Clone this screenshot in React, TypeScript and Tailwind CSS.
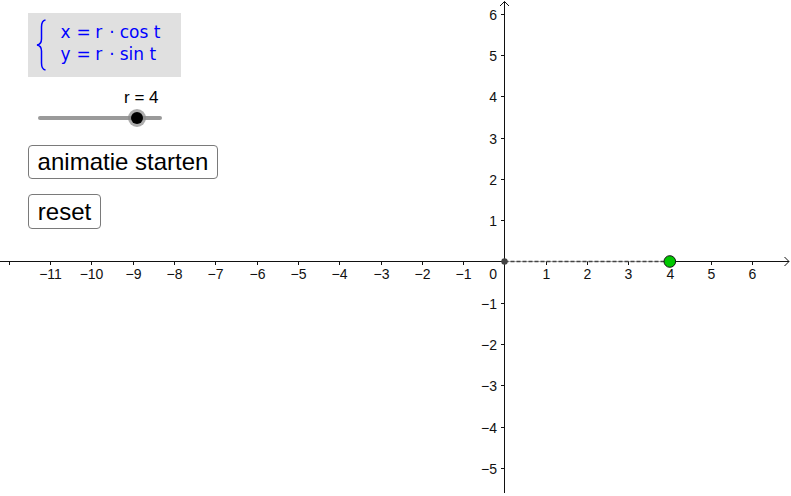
import React from "react";

const U = 41.33;
const OX = 504.5;
const OY = 261.5;

const xs = Array.from({ length: 19 }, (_, i) => i - 12).filter((k) => k !== 0);
const ys = Array.from({ length: 12 }, (_, i) => i - 5).filter((k) => k !== 0);

const fmt = (k: number) => (k < 0 ? "\u2212" + Math.abs(k) : String(k));

function Graph() {
  const px = OX + 4 * U;
  return (
    <svg
      className="absolute inset-0"
      width={791}
      height={496}
      viewBox="0 0 791 496"
      fontFamily='"Liberation Sans", Arial, sans-serif'
      fontSize={14}
    >
      {/* x axis */}
      <line x1={0} y1={OY} x2={OX} y2={OY} stroke="#111" strokeWidth={1} />
      <line x1={px} y1={OY} x2={789} y2={OY} stroke="#111" strokeWidth={1} />
      <line x1={OX} y1={OY} x2={px} y2={OY} stroke="#b8b8b8" strokeWidth={1} />
      <polyline points="784.5,257 789,261.5 784.5,266" fill="none" stroke="#111" strokeWidth={1} />
      {/* y axis */}
      <line x1={OX} y1={1.5} x2={OX} y2={493} stroke="#111" strokeWidth={1} />
      <polyline points="500,6 504.5,1.5 509,6" fill="none" stroke="#111" strokeWidth={1} />
      {/* x ticks and labels */}
      {xs.map((k) => {
        const x = Math.round(OX + k * U) + 0.5;
        return (
          <g key={"x" + k}>
            <line x1={x} y1={OY} x2={x} y2={OY + 3.5} stroke="#111" strokeWidth={1} />
            {k > -12 && (
              <text x={x} y={278.5} textAnchor="middle" fill="#111">
                {fmt(k)}
              </text>
            )}
          </g>
        );
      })}
      <text x={497} y={278.5} textAnchor="end" fill="#111">
        0
      </text>
      {/* y ticks and labels */}
      {ys.map((k) => {
        const y = Math.round(OY - k * U) + 0.5;
        return (
          <g key={"y" + k}>
            <line x1={OX - 3.5} y1={y} x2={OX} y2={y} stroke="#111" strokeWidth={1} />
            <text x={497} y={y + 5} textAnchor="end" fill="#111">
              {fmt(k)}
            </text>
          </g>
        );
      })}
      {/* dashed segment */}
      <line
        x1={OX}
        y1={OY}
        x2={px}
        y2={OY}
        stroke="#444"
        strokeWidth={1.6}
        strokeDasharray="4 2"
      />
      {/* origin point */}
      <circle cx={OX} cy={OY} r={3.2} fill="#444" />
      {/* green point */}
      <circle cx={px} cy={OY} r={5.8} fill="#00c800" stroke="#111" strokeWidth={1} />
    </svg>
  );
}

function FormulaLine({ v, fn }: { v: string; fn: string }) {
  return (
    <div className="flex h-[22px] leading-[22px] whitespace-pre">
      <span>{v}</span>
      <span className="ml-[6px]">=</span>
      <span className="ml-[4.5px]">r</span>
      <span className="ml-[7px]">·</span>
      <span className="ml-[5px]">{fn}</span>
      <span className="ml-[5.5px]">t</span>
    </div>
  );
}

export default function App() {
  return (
    <div className="relative w-[791px] h-[496px] bg-white overflow-hidden">
      <Graph />
      <div className="absolute left-[28px] top-[13px] flex flex-col items-start">
        {/* formula box */}
        <div
          className="flex items-start w-[153px] h-[64px] bg-[#e0e0e0] pl-[7px] pt-[6px] text-[17px] text-[#0000ff]"
          style={{ fontFamily: '"DejaVu Sans", Verdana, sans-serif' }}
        >
          <svg width={12} height={52} viewBox="0 0 12 52" className="shrink-0">
            <path
              d="M10.5 1 C7.5 1.5 6.5 3.5 6.5 8 L6.5 20 C6.5 24 5 25.5 2 26 C5 26.5 6.5 28 6.5 32 L6.5 44 C6.5 48.5 7.5 50.5 10.5 51"
              fill="none"
              stroke="#0000ff"
              strokeWidth={1.5}
            />
          </svg>
          <div className="ml-[13.5px] mt-[2px] flex flex-col">
            <FormulaLine v="x" fn="cos" />
            <FormulaLine v="y" fn="sin" />
          </div>
        </div>

        {/* slider */}
        <div
          className="flex flex-col items-start"
          style={{ fontFamily: '"Liberation Sans", Arial, sans-serif' }}
        >
          <div className="ml-[96px] mt-[11px] text-[17px] leading-[19px] text-black whitespace-pre">
            r = 4
          </div>
          <div className="relative ml-[10px] mt-[9px] w-[124px] h-[4px] rounded-full bg-[#9a9a9a]">
            <div className="absolute left-[90px] top-[-7px] w-[18px] h-[18px] rounded-full bg-[#8a8a8a]/70 flex items-center justify-center">
              <div className="w-[12px] h-[12px] rounded-full bg-black" />
            </div>
          </div>
        </div>

        {/* buttons */}
        <button
          className="mt-[25px] w-[190px] h-[34px] rounded-[4px] border border-[#7a7a7a] bg-white text-[24px] leading-[32px] text-black flex items-center justify-center"
          style={{ fontFamily: '"Liberation Sans", Arial, sans-serif' }}
        >
          animatie starten
        </button>
        <button
          className="mt-[14.5px] w-[73px] h-[35px] rounded-[4px] border border-[#7a7a7a] bg-white text-[24px] leading-[33px] text-black flex items-center justify-center"
          style={{ fontFamily: '"Liberation Sans", Arial, sans-serif' }}
        >
          reset
        </button>
      </div>
    </div>
  );
}
